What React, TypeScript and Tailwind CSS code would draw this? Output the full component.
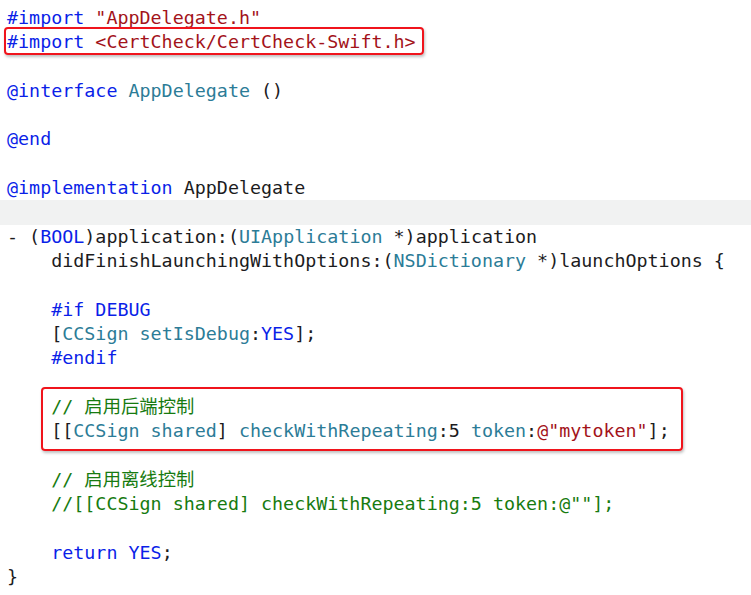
const C = {
  kw: "text-[#0b1fe8]",
  ty: "text-[#2c7c97]",
  st: "text-[#a3131a]",
  cm: "text-[#177b10]",
  tx: "text-[#1c1c1e]",
};

type Seg = [string, string];

const lines: Seg[][] = [
  [[C.kw, "#import "], [C.st, "\"AppDelegate.h\""]],
  [[C.kw, "#import "], [C.st, "<CertCheck/CertCheck-Swift.h>"]],
  [],
  [[C.kw, "@interface "], [C.ty, "AppDelegate"], [C.tx, " ()"]],
  [],
  [[C.kw, "@end"]],
  [],
  [[C.kw, "@implementation "], [C.tx, "AppDelegate"]],
  [],
  [
    [C.tx, "- ("],
    [C.kw, "BOOL"],
    [C.tx, ")application:("],
    [C.ty, "UIApplication"],
    [C.tx, " *)application"],
  ],
  [
    [C.tx, "    didFinishLaunchingWithOptions:("],
    [C.ty, "NSDictionary"],
    [C.tx, " *)launchOptions {"],
  ],
  [],
  [[C.kw, "    #if DEBUG"]],
  [
    [C.tx, "    ["],
    [C.ty, "CCSign setIsDebug"],
    [C.tx, ":"],
    [C.kw, "YES"],
    [C.tx, "];"],
  ],
  [[C.kw, "    #endif"]],
  [],
  [[C.cm, "    // 启用后端控制"]],
  [
    [C.tx, "    [["],
    [C.ty, "CCSign shared"],
    [C.tx, "] "],
    [C.ty, "checkWithRepeating"],
    [C.tx, ":5 "],
    [C.ty, "token"],
    [C.tx, ":"],
    [C.st, "@\"mytoken\""],
    [C.tx, "];"],
  ],
  [],
  [[C.cm, "    // 启用离线控制"]],
  [[C.cm, "    //[[CCSign shared] checkWithRepeating:5 token:@\"\"];"]],
  [],
  [[C.kw, "    return YES"], [C.tx, ";"]],
  [[C.tx, "}"]],
];

export default function App() {
  return (
    <div className="relative h-[595px] w-[751px] overflow-hidden bg-white pt-[6px] font-['DejaVu_Sans_Mono','Noto_Sans_CJK_SC',monospace] text-[18.35px]">
      {lines.map((segs, i) => (
        <div
          key={i}
          className={
            "h-[24.3px] whitespace-pre pl-[7px] leading-[24.3px] " +
            (i === 8 ? "bg-[#f1f2f2]" : "")
          }
        >
          {segs.map(([cls, t], j) => (
            <span key={j} className={cls}>
              {t}
            </span>
          ))}
        </div>
      ))}

      {/* highlight boxes */}
      <div className="absolute left-[4px] top-[27px] h-[28px] w-[420px] rounded-[4px] border-2 border-[#f0141c] shadow-[1px_2px_3px_rgba(0,0,0,0.25)]" />
      <div className="absolute left-[41px] top-[387px] h-[64px] w-[642px] rounded-[4px] border-2 border-[#f0141c] shadow-[1px_2px_3px_rgba(0,0,0,0.25)]" />
    </div>
  );
}
